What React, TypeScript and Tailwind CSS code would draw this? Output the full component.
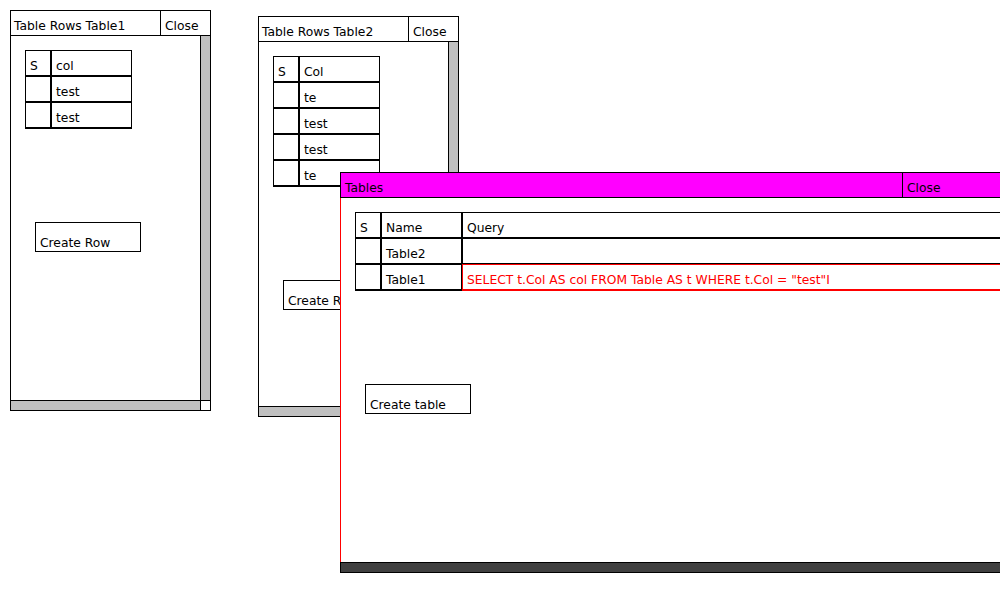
import React from "react";

type Cell = { text?: string; red?: boolean };

function Table({ widths, rows }: { widths: string[]; rows: Cell[][] }) {
  return (
    <div className="flex flex-col">
      {rows.map((row, ri) => {
        const last = ri === rows.length - 1;
        return (
          <div key={ri} className="flex">
            {row.map((c, ci) => (
              <div
                key={ci}
                className={[
                  "shrink-0 flex items-end pl-[4px] pb-[2px] leading-[14px] whitespace-nowrap overflow-hidden border",
                  widths[ci],
                  last ? "h-[27px] border-b-2" : "h-[26px]",
                  c.red ? "border-[#ff0000] text-[#ff0000]" : "border-black",
                ].join(" ")}
              >
                {c.text}
              </div>
            ))}
          </div>
        );
      })}
    </div>
  );
}

function Button({ label }: { label: string }) {
  return (
    <div className="mt-[93px] ml-[10px] w-[106px] h-[30px] border border-black flex items-end pl-[4px] pb-[1px] leading-[14px] whitespace-nowrap overflow-hidden">
      {label}
    </div>
  );
}

function RowsWindow({
  pos,
  title,
  rows,
}: {
  pos: string;
  title: string;
  rows: string[];
}) {
  return (
    <div className={"absolute w-[201px] h-[401px] border border-black bg-white flex flex-col " + pos}>
      <div className="flex h-[25px] border-b border-black shrink-0">
        <div className="flex-1 flex items-end pl-[3px] pb-[2px] leading-[14px] whitespace-nowrap overflow-hidden">
          {title}
        </div>
        <div className="w-[50px] shrink-0 border-l border-black flex items-end pl-[4px] pb-[2px] leading-[14px]">
          Close
        </div>
      </div>
      <div className="flex flex-1 min-h-0">
        <div className="flex-1 pt-[14px] pl-[14px] overflow-hidden">
          <Table
            widths={["w-[26px]", "w-[81px]"]}
            rows={[
              [{ text: "S" }, { text: rows[0] }],
              ...rows.slice(1).map((r) => [{}, { text: r }]),
            ]}
          />
          <Button label="Create Row" />
        </div>
        <div className="w-[10px] shrink-0 border-l border-black bg-[#c0c0c0]" />
      </div>
      <div className="flex h-[10px] border-t border-black shrink-0">
        <div className="flex-1 bg-[#c0c0c0]" />
        <div className="w-[10px] shrink-0 border-l border-black bg-white" />
      </div>
    </div>
  );
}

export default function App() {
  return (
    <div className="relative w-[1000px] h-[600px] overflow-hidden bg-white text-black text-[12.3px] [font-family:'DejaVu_Sans',sans-serif]">
      <RowsWindow pos="left-[10px] top-[10px]" title="Table Rows Table1" rows={["col", "test", "test"]} />
      <RowsWindow pos="left-[258px] top-[16px]" title="Table Rows Table2" rows={["Col", "te", "test", "test", "te"]} />

      <div className="absolute left-[340px] top-[172px] w-[700px] h-[401px] flex flex-col bg-white">
        <div className="flex h-[26px] border-t border-l border-b border-black bg-[#ff00ff] shrink-0">
          <div className="flex-1 flex items-end pl-[4px] pb-[2px] leading-[14px]">Tables</div>
          <div className="w-[138px] shrink-0 border-l border-black flex items-end pl-[4px] pb-[2px] leading-[14px]">
            Close
          </div>
        </div>
        <div className="flex-1 min-h-0 border-l border-[#ff0000] pt-[14px] pl-[14px] overflow-hidden">
          <Table
            widths={["w-[26px]", "w-[81px]", "w-[600px]"]}
            rows={[
              [{ text: "S" }, { text: "Name" }, { text: "Query" }],
              [{}, { text: "Table2" }, {}],
              [
                {},
                { text: "Table1" },
                { text: 'SELECT t.Col AS col FROM Table AS t WHERE t.Col = "test"I', red: true },
              ],
            ]}
          />
          <Button label="Create table" />
        </div>
        <div className="h-[11px] border-t border-b border-l border-black bg-[#404040] shrink-0" />
      </div>
    </div>
  );
}
